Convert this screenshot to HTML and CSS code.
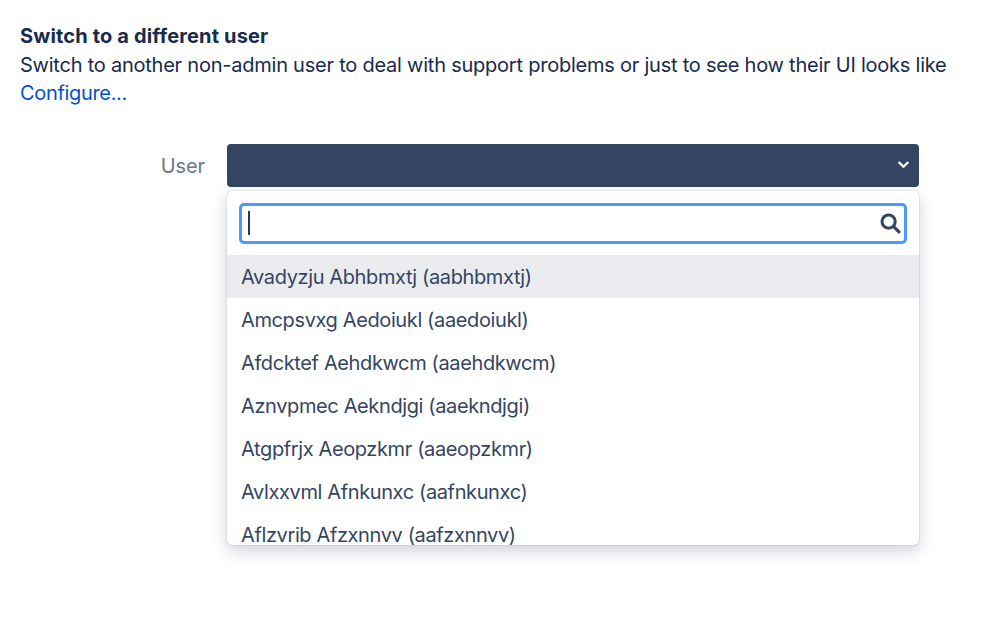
FILE: index.html
```html
<!DOCTYPE html>
<html lang="en">
<head>
<meta charset="utf-8">
<title>Switch to a different user</title>
<link rel="stylesheet" href="styles.css">
</head>
<body>
<main class="page">
  <section class="intro">
    <h1 class="title">Switch to a different user</h1>
    <p class="desc">Switch to another non-admin user to deal with support problems or just to see how their UI looks like</p>
    <a class="link" href="#">Configure...</a>
  </section>
  <form class="field">
    <label class="label">User</label>
    <div class="control">
      <button class="select" type="button">
        <svg class="chev" viewBox="0 0 10 7" width="11" height="8" aria-hidden="true"><path d="M1.2 1.4 5 5.1l3.8-3.7" fill="none" stroke="#fff" stroke-width="2.1" stroke-linecap="round" stroke-linejoin="round"/></svg>
      </button>
      <div class="menu">
        <div class="search">
          <span class="caret"></span>
          <svg class="mag" viewBox="0 0 20 20" width="21" height="21" aria-hidden="true"><circle cx="8.2" cy="8.2" r="6.3" fill="none" stroke="#344563" stroke-width="2.9"/><path d="M13 13l5 5" fill="none" stroke="#344563" stroke-width="3" stroke-linecap="round"/></svg>
        </div>
        <ul class="list">
          <li class="item active">Avadyzju Abhbmxtj (aabhbmxtj)</li>
          <li class="item">Amcpsvxg Aedoiukl (aaedoiukl)</li>
          <li class="item">Afdcktef Aehdkwcm (aaehdkwcm)</li>
          <li class="item">Aznvpmec Aekndjgi (aaekndjgi)</li>
          <li class="item">Atgpfrjx Aeopzkmr (aaeopzkmr)</li>
          <li class="item">Avlxxvml Afnkunxc (aafnkunxc)</li>
          <li class="item">Aflzvrib Afzxnnvv (aafzxnnvv)</li>
        </ul>
      </div>
    </div>
  </form>
</main>
</body>
</html>
```
FILE: styles.css
```css
* { box-sizing: border-box; }
html, body { margin: 0; padding: 0; background: #fff; }
body {
  font-family: Inter, "Liberation Sans", sans-serif;
  font-size: 20px;
  line-height: 28.5px;
  color: #172b4d;
  height: 631px;
  overflow: hidden;
}
.page { padding: 22px 20px 0; }
.title { margin: 0; font-size: 20px; line-height: 28.5px; font-weight: 700; letter-spacing: 0.15px; color: #172b4d; }
.desc { margin: 0; letter-spacing: -0.23px; white-space: nowrap; }
.link { color: #0052cc; text-decoration: none; letter-spacing: -0.33px; display: block; }
.field { display: flex; margin-top: 36px; }
.label { width: 185px; text-align: right; color: #6b778c; line-height: 45px; letter-spacing: -0.1px; }
.control { width: 692px; margin-left: 22px; }
.select {
  display: flex; align-items: center; justify-content: flex-end;
  width: 100%; height: 43px; padding: 0 10px 0 0;
  background: #344563; border: 0; border-radius: 4px;
}
.menu {
  margin-top: 4px; height: 354px; overflow: hidden; background: #fff;
  border-radius: 5px;
  box-shadow: 0 6px 16px rgba(9,30,66,.2), 0 0 1.5px rgba(9,30,66,.3);
}
.search {
  display: flex; align-items: center; justify-content: space-between;
  margin: 12px 12px 11px; height: 41px; padding: 0 3px 0 6px;
  border: 3px solid #4c9aff; border-radius: 5px; background: #fff;
}
.caret { width: 2px; height: 24px; background: #253858; }
.mag { display: block; }
.list { list-style: none; margin: 0; padding: 0; }
.item { height: 43px; line-height: 44px; padding-left: 14px; color: #344563; letter-spacing: -0.38px; white-space: nowrap; }
.active { background: #ebecf0; }
```
